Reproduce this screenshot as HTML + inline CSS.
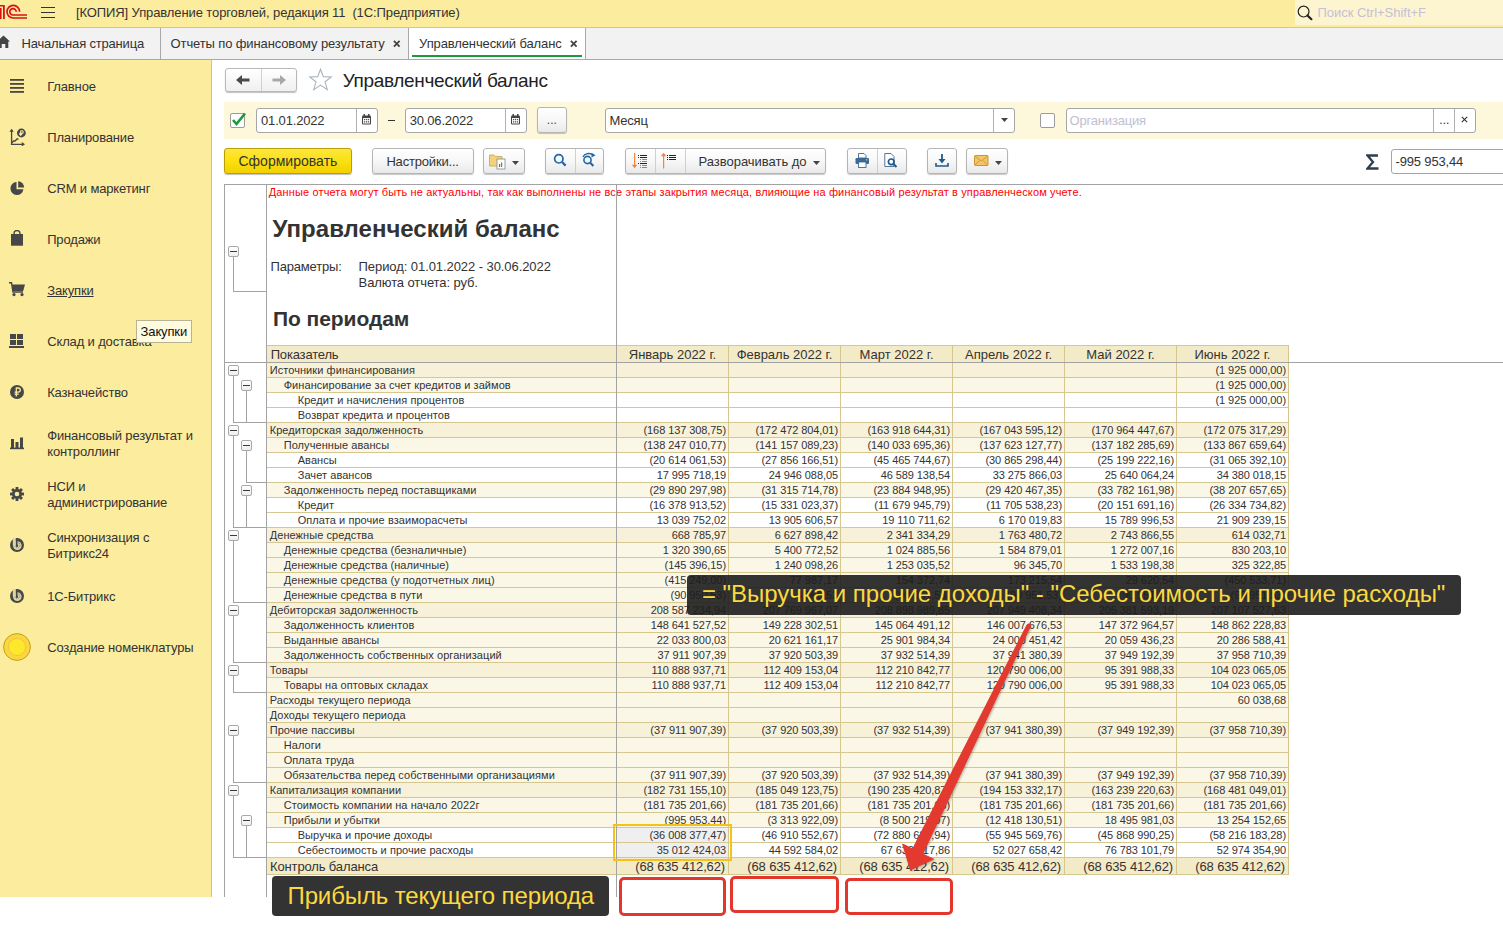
<!DOCTYPE html><html><head><meta charset="utf-8"><title>1C</title><style>*{margin:0;padding:0}
html,body{width:1503px;height:934px;overflow:hidden;background:#fff}
body{position:relative;font-family:"Liberation Sans",sans-serif}
body>div,body>svg{position:absolute}
.t{white-space:nowrap}
</style></head><body>
<div style="left:0px;top:0px;width:1503px;height:27px;background:#fbec9e"></div>
<div style="left:0px;top:27px;width:1503px;height:1px;background:#d9c680"></div>
<div style="left:1295px;top:0px;width:208px;height:25px;background:#fdf5d0"></div>
<svg style="left:0;top:0" width="30" height="27" viewBox="0 0 30 27">
<g fill="#d7121b">
<rect x="0" y="8" width="1.6" height="11"/>
<path d="M0 5 H4.8 V19 H3 V6.6 H0 Z"/>
</g>
<g fill="none" stroke="#d7121b" stroke-width="1.7">
<path d="M19.6 11.8 A6.3 6.3 0 1 0 13.2 18 H27"/>
<path d="M16.2 11.8 A3.2 3.2 0 1 0 13.2 15 H27"/>
</g></svg>
<div style="left:41px;top:7px;width:14px;height:1.4px;background:#333"></div>
<div style="left:41px;top:12px;width:14px;height:1.4px;background:#333"></div>
<div style="left:41px;top:17px;width:14px;height:1.4px;background:#333"></div>
<div class="t" style="left:76px;top:6.30px;font-size:13px;line-height:13px;height:13px;color:#333;letter-spacing:-0.106px;white-space:pre;">[КОПИЯ] Управление торговлей, редакция 11  (1С:Предприятие)</div>
<svg style="left:1297px;top:5px" width="17" height="16" viewBox="0 0 17 16">
<circle cx="6.6" cy="6.6" r="5.4" fill="none" stroke="#222" stroke-width="1.2"/>
<path d="M10.5 10.5 L14.4 14.2" stroke="#222" stroke-width="2.2" stroke-linecap="round"/></svg>
<div class="t" style="left:1317.4px;top:5.60px;font-size:13px;line-height:13px;height:13px;color:#c4c0d6;letter-spacing:-0.022px;">Поиск Ctrl+Shift+F</div>
<div style="left:0px;top:28px;width:1503px;height:31px;background:#f2f2f2"></div>
<div style="left:0px;top:59px;width:1503px;height:1px;background:#a8a8a8"></div>
<div style="left:160px;top:28px;width:1px;height:31px;background:#a8a8a8"></div>
<div style="left:409px;top:28px;width:176px;height:31px;background:#ffffff"></div>
<div style="left:408px;top:28px;width:1px;height:31px;background:#a8a8a8"></div>
<div style="left:585px;top:28px;width:1px;height:31px;background:#a8a8a8"></div>
<div style="left:412px;top:55px;width:170px;height:2px;background:#1c9a3c"></div>
<svg style="left:0;top:35px" width="12" height="14" viewBox="0 0 12 14">
<path d="M-3 6.5 L3.5 0.5 L10 6.5 H8.3 V13 H5.3 V9 H1.7 V13 H-1.3 V6.5 Z" fill="#444"/></svg>
<div class="t" style="left:21.5px;top:37.00px;font-size:13px;line-height:13px;height:13px;color:#333;letter-spacing:-0.183px;">Начальная страница</div>
<div class="t" style="left:170.6px;top:37.00px;font-size:13px;line-height:13px;height:13px;color:#333;letter-spacing:-0.123px;">Отчеты по финансовому результату</div>
<div class="t" style="left:419.1px;top:37.00px;font-size:13px;line-height:13px;height:13px;color:#333;letter-spacing:-0.118px;">Управленческий баланс</div>
<svg style="left:393px;top:40px" width="8" height="8" viewBox="0 0 8 8"><path d="M0.9 0.9 L6.6 6.6 M6.6 0.9 L0.9 6.6" stroke="#444" stroke-width="1.8"/></svg>
<svg style="left:570px;top:40px" width="8" height="8" viewBox="0 0 8 8"><path d="M0.9 0.9 L6.6 6.6 M6.6 0.9 L0.9 6.6" stroke="#444" stroke-width="1.8"/></svg>
<div style="left:0px;top:60px;width:211px;height:837px;background:#fbec9e"></div>
<div style="left:211px;top:60px;width:1px;height:837px;background:#d6c47e"></div>
<svg style="left:10px;top:79px" width="15" height="15"><g fill="#474747"><rect x="0" y="0" width="14" height="1.8"/><rect x="0" y="4" width="14" height="1.8"/><rect x="0" y="8" width="14" height="1.8"/><rect x="0" y="12" width="14" height="1.8"/></g></svg>
<svg style="left:9px;top:128px" width="17" height="18" viewBox="0 0 17 18"><g stroke="#474747" stroke-width="1.3" fill="none"><path d="M2.6 2.5 V16.3 H14"/><path d="M2.6 15 L4.5 13 H6 L8 11 H9.5"/></g><path d="M0.4 3.8 L2.6 0.8 L4.8 3.8 Z M12.8 14.1 L16 16.3 L12.8 18.5 Z" fill="#474747"/><circle cx="12.4" cy="5" r="4.4" fill="#474747"/><path d="M11.7 2.4 V8 M10.3 6.4 H13.2 M11.7 2.7 H12.9 A1.35 1.35 0 0 1 12.9 5.4 H10.3" stroke="#fbec9e" stroke-width="1.1" fill="none"/></svg>
<svg style="left:10px;top:181px" width="15" height="15" viewBox="0 0 15 15"><path d="M6.5 1 A6.5 6.5 0 1 0 13.4 8.2 L6.5 8.2 Z" fill="#474747"/><path d="M8.2 0.3 A6.5 6.5 0 0 1 14.2 6.5 L8.2 6.5 Z" fill="#474747"/></svg>
<svg style="left:10px;top:230px" width="14" height="16" viewBox="0 0 14 16"><rect x="1" y="4" width="12" height="11.7" fill="#474747"/><path d="M4 6 V3.5 A3 3 0 0 1 10 3.5 V6" stroke="#474747" stroke-width="1.4" fill="none"/></svg>
<svg style="left:9px;top:282px" width="17" height="15" viewBox="0 0 17 15"><path d="M0 0.8 H2.5 L4 10 H14" stroke="#474747" stroke-width="1.4" fill="none"/><path d="M3 2.5 H16 L14.2 9 H4 Z" fill="#474747"/><circle cx="5" cy="12.6" r="1.6" fill="#474747"/><circle cx="13" cy="12.6" r="1.6" fill="#474747"/></svg>
<svg style="left:9px;top:333px" width="16" height="16" viewBox="0 0 16 16"><g fill="#474747"><rect x="1" y="1" width="6" height="5"/><rect x="8" y="1" width="6" height="5"/><rect x="1" y="7" width="6" height="5"/><rect x="8" y="7" width="6" height="5"/><rect x="0" y="13" width="15" height="2"/></g></svg>
<svg style="left:10px;top:385px" width="14" height="14" viewBox="0 0 14 14"><circle cx="7" cy="7" r="7" fill="#474747"/><path d="M6.3 11.5 V3 H8.2 A2.1 2.1 0 0 1 8.2 7.2 H4.6 M4.6 9.2 H8.8" stroke="#fbec9e" stroke-width="1.3" fill="none"/></svg>
<svg style="left:10px;top:437px" width="15" height="13" viewBox="0 0 15 13"><g fill="#474747"><rect x="1" y="2" width="3" height="9"/><rect x="5.5" y="5" width="3" height="6"/><rect x="10" y="0.5" width="3" height="10.5"/><rect x="0" y="10.6" width="14" height="1.6"/></g></svg>
<svg style="left:10px;top:487px" width="14" height="14" viewBox="0 0 14 14"><g fill="#474747"><circle cx="7" cy="7" r="5"/><rect x="5.6" y="0" width="2.8" height="14"/><rect x="0" y="5.6" width="14" height="2.8"/><rect x="5.6" y="0" width="2.8" height="14" transform="rotate(45 7 7)"/><rect x="5.6" y="0" width="2.8" height="14" transform="rotate(-45 7 7)"/></g><circle cx="7" cy="7" r="2.3" fill="#fbec9e"/></svg>
<svg style="left:10px;top:538px" width="14" height="14" viewBox="0 0 14 14"><circle cx="7" cy="7" r="7" fill="#474747"/><circle cx="7.3" cy="7.6" r="4.3" fill="#ddd6a2"/><rect x="2.8" y="0" width="3.1" height="7" fill="#ddd6a2"/><rect x="5.9" y="0.3" width="1.6" height="7.5" fill="#474747"/><circle cx="7" cy="7.8" r="1.2" fill="#474747"/><path d="M7.6 4.6 A2.6 2.6 0 1 1 5 8.2" stroke="#474747" stroke-width="0.7" stroke-dasharray="0.8 0.8" fill="none"/></svg>
<svg style="left:10px;top:589px" width="14" height="14" viewBox="0 0 14 14"><circle cx="7" cy="7" r="7" fill="#474747"/><circle cx="7.3" cy="7.6" r="4.3" fill="#ddd6a2"/><rect x="2.8" y="0" width="3.1" height="7" fill="#ddd6a2"/><rect x="5.9" y="0.3" width="1.6" height="7.5" fill="#474747"/><circle cx="7" cy="7.8" r="1.2" fill="#474747"/><path d="M7.6 4.6 A2.6 2.6 0 1 1 5 8.2" stroke="#474747" stroke-width="0.7" stroke-dasharray="0.8 0.8" fill="none"/></svg>
<svg style="left:3px;top:633px" width="28" height="28" viewBox="0 0 28 28">
<circle cx="14" cy="14" r="13.4" fill="#fcd545" stroke="#c4a20a" stroke-width="1"/>
<circle cx="14" cy="14" r="8.6" fill="#fde82c" stroke="#e9c23a" stroke-width="0.8"/></svg>
<div class="t" style="left:47.2px;top:80.00px;font-size:13px;line-height:13px;height:13px;color:#333;letter-spacing:-0.149px;">Главное</div>
<div class="t" style="left:47.2px;top:131.00px;font-size:13px;line-height:13px;height:13px;color:#333;letter-spacing:-0.155px;">Планирование</div>
<div class="t" style="left:47.2px;top:182.00px;font-size:13px;line-height:13px;height:13px;color:#333;letter-spacing:-0.147px;">CRM и маркетинг</div>
<div class="t" style="left:47.2px;top:233.00px;font-size:13px;line-height:13px;height:13px;color:#333;letter-spacing:-0.163px;">Продажи</div>
<div class="t" style="left:47.2px;top:284.00px;font-size:13px;line-height:13px;height:13px;color:#333;letter-spacing:-0.142px;text-decoration:underline;">Закупки</div>
<div class="t" style="left:47.2px;top:335.00px;font-size:13px;line-height:13px;height:13px;color:#333;letter-spacing:-0.140px;">Склад и доставка</div>
<div class="t" style="left:47.2px;top:386.00px;font-size:13px;line-height:13px;height:13px;color:#333;letter-spacing:-0.144px;">Казначейство</div>
<div class="t" style="left:47.2px;top:428.70px;font-size:13px;line-height:13px;height:13px;color:#333;letter-spacing:-0.142px;">Финансовый результат и</div>
<div class="t" style="left:47.2px;top:445.30px;font-size:13px;line-height:13px;height:13px;color:#333;letter-spacing:-0.143px;">контроллинг</div>
<div class="t" style="left:47.2px;top:479.50px;font-size:13px;line-height:13px;height:13px;color:#333;letter-spacing:-0.164px;">НСИ и</div>
<div class="t" style="left:47.2px;top:495.80px;font-size:13px;line-height:13px;height:13px;color:#333;letter-spacing:-0.151px;">администрирование</div>
<div class="t" style="left:47.2px;top:530.60px;font-size:13px;line-height:13px;height:13px;color:#333;letter-spacing:-0.146px;">Синхронизация с</div>
<div class="t" style="left:47.2px;top:546.60px;font-size:13px;line-height:13px;height:13px;color:#333;letter-spacing:-0.147px;">Битрикс24</div>
<div class="t" style="left:47.2px;top:590.00px;font-size:13px;line-height:13px;height:13px;color:#333;letter-spacing:-0.146px;">1С-Битрикс</div>
<div class="t" style="left:47.2px;top:641.00px;font-size:13px;line-height:13px;height:13px;color:#333;letter-spacing:-0.149px;">Создание номенклатуры</div>
<div style="left:136px;top:320px;width:56px;height:23px;background:#fffbdf;border:1px solid #b9b396;box-sizing:border-box"></div>
<div class="t" style="left:140.6px;top:324.70px;font-size:13px;line-height:13px;height:13px;color:#111;letter-spacing:-0.143px;">Закупки</div>
<div style="left:225px;top:68px;width:72px;height:24px;border:1px solid #b9b9b9;border-radius:3px;box-sizing:border-box;background:linear-gradient(#ffffff,#f0f0f0);box-shadow:0 1px 1px rgba(0,0,0,0.25)"></div>
<div style="left:261px;top:69px;width:1px;height:22px;background:#d0d0d0"></div>
<svg style="left:235px;top:73px" width="56" height="14" viewBox="0 0 56 14">
<path d="M1 7 L7 2 V5.5 H14.5 V8.5 H7 V12 Z" fill="#4a4a4a"/>
<path d="M51 7 L45 2 V5.5 H37.5 V8.5 H45 V12 Z" fill="#a8a8a8"/></svg>
<svg style="left:308px;top:68px" width="25" height="24" viewBox="0 0 25 24">
<path d="M12.5 1.2 L15.3 8.6 L23.3 8.9 L17 13.8 L19.3 21.6 L12.5 17.1 L5.7 21.6 L8 13.8 L1.7 8.9 L9.7 8.6 Z" fill="none" stroke="#aab4bd" stroke-width="1.1" stroke-linejoin="miter"/></svg>
<div class="t" style="left:342.7px;top:70.92px;font-size:19px;line-height:19px;height:19px;color:#222;letter-spacing:-0.328px;">Управленческий баланс</div>
<div style="left:224px;top:102px;width:1279px;height:37px;background:#fdf7dc"></div>
<div style="left:230px;top:112.5px;width:15px;height:15px;border:1px solid #9c9c9c;border-radius:2px;box-sizing:border-box;background:#fff"></div>
<svg style="left:230px;top:110.5px" width="17" height="17" viewBox="0 0 17 17"><path d="M3 9 L6.5 13 L15 2.5" stroke="#1a9a3a" stroke-width="2.6" fill="none"/></svg>
<div style="left:256px;top:108px;width:122px;height:25px;border:1px solid #a6a6a6;border-radius:3px;box-sizing:border-box;background:#fff;"></div>
<div style="left:356px;top:109px;width:1px;height:23px;background:#b0b0b0"></div>
<svg style="left:362px;top:114px" width="10" height="11" viewBox="0 0 10 11"><rect x="0" y="1.5" width="9" height="9" rx="1.2" fill="#444"/><rect x="1" y="4" width="7" height="5.5" fill="#fff"/><g fill="#555"><rect x="1.9" y="4.9" width="1.3" height="1.3"/><rect x="3.9" y="4.9" width="1.3" height="1.3"/><rect x="5.9" y="4.9" width="1.3" height="1.3"/><rect x="1.9" y="7.2" width="1.3" height="1.3"/><rect x="3.9" y="7.2" width="1.3" height="1.3"/><rect x="5.9" y="7.2" width="1.3" height="1.3"/></g><rect x="1.5" y="0" width="1.5" height="2.5" fill="#444"/><rect x="6" y="0" width="1.5" height="2.5" fill="#444"/></svg>
<div class="t" style="left:261px;top:113.50px;font-size:13px;line-height:13px;height:13px;color:#333;letter-spacing:-0.163px;">01.01.2022</div>
<div style="left:388px;top:120px;width:7px;height:1.3px;background:#333"></div>
<div style="left:405px;top:108px;width:122px;height:25px;border:1px solid #a6a6a6;border-radius:3px;box-sizing:border-box;background:#fff;"></div>
<div style="left:505px;top:109px;width:1px;height:23px;background:#b0b0b0"></div>
<svg style="left:511px;top:114px" width="10" height="11" viewBox="0 0 10 11"><rect x="0" y="1.5" width="9" height="9" rx="1.2" fill="#444"/><rect x="1" y="4" width="7" height="5.5" fill="#fff"/><g fill="#555"><rect x="1.9" y="4.9" width="1.3" height="1.3"/><rect x="3.9" y="4.9" width="1.3" height="1.3"/><rect x="5.9" y="4.9" width="1.3" height="1.3"/><rect x="1.9" y="7.2" width="1.3" height="1.3"/><rect x="3.9" y="7.2" width="1.3" height="1.3"/><rect x="5.9" y="7.2" width="1.3" height="1.3"/></g><rect x="1.5" y="0" width="1.5" height="2.5" fill="#444"/><rect x="6" y="0" width="1.5" height="2.5" fill="#444"/></svg>
<div class="t" style="left:409.7px;top:113.50px;font-size:13px;line-height:13px;height:13px;color:#333;letter-spacing:-0.163px;">30.06.2022</div>
<div style="left:537px;top:107px;width:30px;height:26px;border:1px solid #b5b5b5;border-radius:3px;box-sizing:border-box;background:linear-gradient(#ffffff 0%,#f7f7f7 50%,#e9e9e9 100%);box-shadow:0 1px 1px rgba(0,0,0,0.22);"></div>
<div class="t" style="left:546.8px;top:113.84px;font-size:12px;line-height:12px;height:12px;color:#444;">...</div>
<div style="left:605px;top:108px;width:410px;height:25px;border:1px solid #a6a6a6;border-radius:3px;box-sizing:border-box;background:#fff;"></div>
<div style="left:993px;top:109px;width:1px;height:23px;background:#b0b0b0"></div>
<svg style="left:1000.5px;top:118px" width="7" height="4" viewBox="0 0 7 4"><path d="M0 0 H7 L3.5 4 Z" fill="#444"/></svg>
<div class="t" style="left:609.5px;top:113.50px;font-size:13px;line-height:13px;height:13px;color:#333;letter-spacing:-0.196px;">Месяц</div>
<div style="left:1040px;top:113px;width:15px;height:15px;border:1px solid #9c9c9c;border-radius:2px;box-sizing:border-box;background:#fff"></div>
<div style="left:1066px;top:108px;width:410px;height:25px;border:1px solid #a6a6a6;border-radius:3px;box-sizing:border-box;background:#fff;"></div>
<div style="left:1433px;top:109px;width:1px;height:23px;background:#b0b0b0"></div>
<div style="left:1454px;top:109px;width:1px;height:23px;background:#b0b0b0"></div>
<div class="t" style="left:1069.5px;top:113.50px;font-size:13px;line-height:13px;height:13px;color:#c0c0d0;letter-spacing:-0.178px;">Организация</div>
<div class="t" style="left:1439.3px;top:113.84px;font-size:12px;line-height:12px;height:12px;color:#333;">...</div>
<svg style="left:1461px;top:116px" width="7" height="7" viewBox="0 0 7 7"><path d="M0.8 0.8 L6.2 6.2 M6.2 0.8 L0.8 6.2" stroke="#333" stroke-width="1.1"/></svg>
<div style="left:224px;top:148px;width:128px;height:26px;border:1px solid #bb9f00;border-radius:3px;box-sizing:border-box;background:linear-gradient(#fde640 0%,#fbe010 50%,#f3d000 100%);box-shadow:0 1px 1px rgba(0,0,0,0.25)"></div>
<div class="t" style="left:238.4px;top:153.95px;font-size:14px;line-height:14px;height:14px;color:#333;letter-spacing:0.026px;">Сформировать</div>
<div style="left:372px;top:148px;width:102px;height:26px;border:1px solid #b5b5b5;border-radius:3px;box-sizing:border-box;background:linear-gradient(#ffffff 0%,#f7f7f7 50%,#e9e9e9 100%);box-shadow:0 1px 1px rgba(0,0,0,0.22);"></div>
<div class="t" style="left:386.4px;top:154.50px;font-size:13px;line-height:13px;height:13px;color:#333;letter-spacing:-0.182px;">Настройки...</div>
<div style="left:483px;top:148px;width:42px;height:26px;border:1px solid #b5b5b5;border-radius:3px;box-sizing:border-box;background:linear-gradient(#ffffff 0%,#f7f7f7 50%,#e9e9e9 100%);box-shadow:0 1px 1px rgba(0,0,0,0.22);"></div>
<svg style="left:489px;top:152px" width="20" height="18" viewBox="0 0 20 18">
<path d="M0.5 3 H5 L6.5 4.5 H13 V14 H0.5 Z" fill="#f4d27a" stroke="#c9a24a" stroke-width="0.8"/>
<rect x="8" y="7" width="8" height="10" fill="#fff" stroke="#7a8a99" stroke-width="0.8"/>
<rect x="10" y="12" width="1.2" height="3" fill="#e04030"/><rect x="12" y="10.5" width="1.2" height="4.5" fill="#40a040"/></svg>
<svg style="left:512px;top:160.5px" width="7" height="4" viewBox="0 0 7 4"><path d="M0 0 H7 L3.5 4 Z" fill="#444"/></svg>
<div style="left:545px;top:148px;width:59px;height:26px;border:1px solid #b5b5b5;border-radius:3px;box-sizing:border-box;background:linear-gradient(#ffffff 0%,#f7f7f7 50%,#e9e9e9 100%);box-shadow:0 1px 1px rgba(0,0,0,0.22);"></div>
<div style="left:575px;top:149px;width:1px;height:24px;background:#cfcfcf"></div>
<svg style="left:553px;top:153px" width="14" height="15" viewBox="0 0 14 15"><circle cx="5.8" cy="5.8" r="4.2" fill="none" stroke="#1d67a8" stroke-width="1.7"/><path d="M9 9 L12.6 12.6" stroke="#1d67a8" stroke-width="2.2"/></svg>
<svg style="left:581px;top:152px" width="17" height="16" viewBox="0 0 17 16"><circle cx="6.5" cy="8" r="3.6" fill="none" stroke="#1d67a8" stroke-width="1.6"/><path d="M9.2 10.8 L12.4 14" stroke="#1d67a8" stroke-width="2.1"/><path d="M2 5 A6 5 0 0 1 12 3" fill="none" stroke="#1d67a8" stroke-width="1.3"/><path d="M10.5 0.8 L14.5 3.3 L10.5 5.6 Z" fill="#1d67a8"/></svg>
<div style="left:625px;top:148px;width:201px;height:26px;border:1px solid #b5b5b5;border-radius:3px;box-sizing:border-box;background:linear-gradient(#ffffff 0%,#f7f7f7 50%,#e9e9e9 100%);box-shadow:0 1px 1px rgba(0,0,0,0.22);"></div>
<div style="left:655px;top:149px;width:1px;height:24px;background:#cfcfcf"></div>
<div style="left:685px;top:149px;width:1px;height:24px;background:#cfcfcf"></div>
<svg style="left:630px;top:152px" width="20" height="18" viewBox="0 0 20 18"><rect x="4" y="1" width="1.2" height="13" fill="#f08442"/><path d="M1.8 12.8 H7.4 L4.6 16.3 Z" fill="#f08442"/>
<g fill="#222"><rect x="8" y="3" width="1" height="1"/><rect x="10" y="3" width="7" height="1"/><rect x="8" y="5" width="1" height="1"/><rect x="10" y="5" width="7" height="1"/><rect x="8" y="11" width="1" height="1"/><rect x="10" y="11" width="7" height="1"/></g>
<g fill="#8a8a8a"><rect x="10" y="7" width="1" height="1"/><rect x="12" y="7" width="5" height="1"/><rect x="10" y="9" width="1" height="1"/><rect x="12" y="9" width="5" height="1"/><rect x="10" y="13" width="1" height="1"/><rect x="12" y="13" width="5" height="1"/><rect x="10" y="15" width="1" height="1"/><rect x="12" y="15" width="5" height="1"/></g></svg>
<svg style="left:659px;top:152px" width="20" height="18" viewBox="0 0 20 18"><rect x="4" y="3.5" width="1.2" height="13" fill="#f08442"/><path d="M1.8 4.2 H7.4 L4.6 0.8 Z" fill="#f08442"/>
<g fill="#222"><rect x="8" y="3" width="1" height="1"/><rect x="10" y="3" width="7" height="1"/><rect x="8" y="5" width="1" height="1"/><rect x="10" y="5" width="7" height="1"/><rect x="8" y="7" width="1" height="1"/><rect x="10" y="7" width="7" height="1"/></g></svg>
<div class="t" style="left:698.5px;top:154.50px;font-size:13px;line-height:13px;height:13px;color:#333;letter-spacing:-0.021px;">Разворачивать до</div>
<svg style="left:813px;top:160.5px" width="7" height="4" viewBox="0 0 7 4"><path d="M0 0 H7 L3.5 4 Z" fill="#444"/></svg>
<div style="left:847px;top:148px;width:60px;height:26px;border:1px solid #b5b5b5;border-radius:3px;box-sizing:border-box;background:linear-gradient(#ffffff 0%,#f7f7f7 50%,#e9e9e9 100%);box-shadow:0 1px 1px rgba(0,0,0,0.22);"></div>
<div style="left:877px;top:149px;width:1px;height:24px;background:#cfcfcf"></div>
<svg style="left:855px;top:153px" width="15" height="15" viewBox="0 0 15 15"><path d="M3.5 0.5 H9 L11 2.5 V5 H3.5 Z" fill="#fff" stroke="#3d6a95" stroke-width="0.9"/><rect x="0.5" y="5" width="13.5" height="6" rx="1.2" fill="#3d6a95"/><rect x="3.5" y="9" width="7.5" height="5.5" fill="#fff" stroke="#3d6a95" stroke-width="0.9"/><circle cx="11.7" cy="6.8" r="0.6" fill="#fff"/></svg>
<svg style="left:884px;top:153px" width="15" height="15" viewBox="0 0 15 15"><path d="M0.8 0.5 H7 L10 3.5 V13.5 H0.8 Z" fill="#fff" stroke="#3d6a95" stroke-width="0.9"/><circle cx="7.2" cy="8.8" r="2.8" fill="none" stroke="#1f5a8a" stroke-width="1.7"/><path d="M9.2 10.8 L12.5 14" stroke="#1f5a8a" stroke-width="2"/></svg>
<div style="left:927px;top:148px;width:30px;height:26px;border:1px solid #b5b5b5;border-radius:3px;box-sizing:border-box;background:linear-gradient(#ffffff 0%,#f7f7f7 50%,#e9e9e9 100%);box-shadow:0 1px 1px rgba(0,0,0,0.22);"></div>
<svg style="left:935px;top:154px" width="15" height="14" viewBox="0 0 15 14"><path d="M7 0 V8" stroke="#1f5a8a" stroke-width="1.8"/><path d="M3.5 5 L7 9.5 L10.5 5 Z" fill="#1f5a8a"/><path d="M1 9 V12 H13 V9" stroke="#1f5a8a" stroke-width="1.6" fill="none"/></svg>
<div style="left:966px;top:148px;width:42px;height:26px;border:1px solid #b5b5b5;border-radius:3px;box-sizing:border-box;background:linear-gradient(#ffffff 0%,#f7f7f7 50%,#e9e9e9 100%);box-shadow:0 1px 1px rgba(0,0,0,0.22);"></div>
<svg style="left:974px;top:155px" width="16" height="12" viewBox="0 0 16 12"><rect x="0.5" y="0.5" width="13.5" height="10" rx="1" fill="#f3c567" stroke="#c48b2d" stroke-width="0.9"/><path d="M0.8 1 L7.25 6 L13.7 1 M0.8 10.3 L5.5 5.5 M13.7 10.3 L9 5.5" fill="none" stroke="#c48b2d" stroke-width="0.8"/></svg>
<svg style="left:995px;top:160.5px" width="7" height="4" viewBox="0 0 7 4"><path d="M0 0 H7 L3.5 4 Z" fill="#444"/></svg>
<svg style="left:1366px;top:154px" width="14" height="16" viewBox="0 0 14 16"><path d="M12 1.5 H1.5 L7 8 L1.5 14.5 H12.5" fill="none" stroke="#2d3e50" stroke-width="2.3" stroke-linejoin="miter"/></svg>
<div style="left:1391px;top:149px;width:120px;height:25px;border:1px solid #a6a6a6;border-radius:3px;box-sizing:border-box;background:#fff;"></div>
<div class="t" style="left:1395.5px;top:155.00px;font-size:13px;line-height:13px;height:13px;color:#333;letter-spacing:-0.158px;">-995 953,44</div>
<div style="left:224px;top:184px;width:1279px;height:1px;background:#a3a3a3"></div>
<div class="t" style="left:268.8px;top:186.69px;font-size:11px;line-height:11px;height:11px;color:#ff0000;letter-spacing:0.125px;">Данные отчета могут быть не актуальны, так как выполнены не все этапы закрытия месяца, влияющие на финансовый результат в управленческом учете.</div>
<div style="left:228px;top:246px;width:11px;height:11px;border:1px solid #a9a9a9;border-radius:2px;box-sizing:border-box;background:linear-gradient(#ffffff,#eeeeee)"></div>
<div style="left:230px;top:251px;width:7px;height:1px;background:#3a3a3a"></div>
<div style="left:233px;top:257px;width:1px;height:34px;background:#a3a3a3"></div>
<div style="left:233px;top:291px;width:33px;height:1px;background:#a3a3a3"></div>
<div class="t" style="left:272.6px;top:217.08px;font-size:24px;line-height:24px;height:24px;color:#333;font-weight:bold;letter-spacing:0.008px;">Управленческий баланс</div>
<div class="t" style="left:270.5px;top:259.60px;font-size:13px;line-height:13px;height:13px;color:#333;letter-spacing:-0.182px;">Параметры:</div>
<div class="t" style="left:358.6px;top:259.60px;font-size:13px;line-height:13px;height:13px;color:#333;letter-spacing:-0.074px;">Период: 01.01.2022 - 30.06.2022</div>
<div class="t" style="left:358.6px;top:276.30px;font-size:13px;line-height:13px;height:13px;color:#333;letter-spacing:-0.096px;">Валюта отчета: руб.</div>
<div class="t" style="left:273px;top:308.12px;font-size:21px;line-height:21px;height:21px;color:#333;font-weight:bold;letter-spacing:-0.059px;">По периодам</div>
<div style="left:266px;top:345px;width:1022px;height:1px;background:#d6c791"></div>
<div style="left:267px;top:346px;width:1021px;height:16px;background:#f3eac8"></div>
<div class="t" style="left:270.7px;top:348.00px;font-size:13px;line-height:13px;height:13px;color:#333;letter-spacing:-0.174px;">Показатель</div>
<div class="t" style="left:628.764453125px;top:348.00px;font-size:13px;line-height:13px;height:13px;color:#333;letter-spacing:0.000px;">Январь 2022 г.</div>
<div class="t" style="left:736.62578125px;top:348.00px;font-size:13px;line-height:13px;height:13px;color:#333;letter-spacing:0.000px;">Февраль 2022 г.</div>
<div class="t" style="left:859.493046875px;top:348.00px;font-size:13px;line-height:13px;height:13px;color:#333;letter-spacing:0.000px;">Март 2022 г.</div>
<div class="t" style="left:964.99609375px;top:348.00px;font-size:13px;line-height:13px;height:13px;color:#333;letter-spacing:0.000px;">Апрель 2022 г.</div>
<div class="t" style="left:1086.31140625px;top:348.00px;font-size:13px;line-height:13px;height:13px;color:#333;letter-spacing:0.000px;">Май 2022 г.</div>
<div class="t" style="left:1194.521796875px;top:348.00px;font-size:13px;line-height:13px;height:13px;color:#333;letter-spacing:0.000px;">Июнь 2022 г.</div>
<div style="left:267px;top:363px;width:1021px;height:14px;background:#f7f1d9"></div>
<div style="left:266px;top:377px;width:1022px;height:1px;background:#d6c791"></div>
<div class="t" style="left:269.7px;top:364.69px;font-size:11px;line-height:11px;height:11px;color:#333;letter-spacing:0.072px;">Источники финансирования</div>
<div class="t" style="right:217px;top:364.69px;font-size:11px;line-height:11px;height:11px;color:#333;letter-spacing:-0.077px;text-align:right;">(1 925 000,00)</div>
<div style="left:267px;top:378px;width:1021px;height:14px;background:#fbf7e7"></div>
<div style="left:266px;top:392px;width:1022px;height:1px;background:#d6c791"></div>
<div class="t" style="left:283.7px;top:379.69px;font-size:11px;line-height:11px;height:11px;color:#333;letter-spacing:0.067px;">Финансирование за счет кредитов и займов</div>
<div class="t" style="right:217px;top:379.69px;font-size:11px;line-height:11px;height:11px;color:#333;letter-spacing:-0.077px;text-align:right;">(1 925 000,00)</div>
<div style="left:267px;top:393px;width:1021px;height:14px;background:#ffffff"></div>
<div style="left:266px;top:407px;width:1022px;height:1px;background:#d6c791"></div>
<div class="t" style="left:297.7px;top:394.69px;font-size:11px;line-height:11px;height:11px;color:#333;letter-spacing:0.068px;">Кредит и начисления процентов</div>
<div class="t" style="right:217px;top:394.69px;font-size:11px;line-height:11px;height:11px;color:#333;letter-spacing:-0.077px;text-align:right;">(1 925 000,00)</div>
<div style="left:267px;top:408px;width:1021px;height:14px;background:#ffffff"></div>
<div style="left:266px;top:422px;width:1022px;height:1px;background:#d6c791"></div>
<div class="t" style="left:297.7px;top:409.69px;font-size:11px;line-height:11px;height:11px;color:#333;letter-spacing:0.067px;">Возврат кредита и процентов</div>
<div style="left:267px;top:423px;width:1021px;height:14px;background:#f7f1d9"></div>
<div style="left:266px;top:437px;width:1022px;height:1px;background:#d6c791"></div>
<div class="t" style="left:269.7px;top:424.69px;font-size:11px;line-height:11px;height:11px;color:#333;letter-spacing:0.070px;">Кредиторская задолженность</div>
<div class="t" style="right:777px;top:424.69px;font-size:11px;line-height:11px;height:11px;color:#333;letter-spacing:-0.079px;text-align:right;">(168 137 308,75)</div>
<div class="t" style="right:665px;top:424.69px;font-size:11px;line-height:11px;height:11px;color:#333;letter-spacing:-0.079px;text-align:right;">(172 472 804,01)</div>
<div class="t" style="right:553px;top:424.69px;font-size:11px;line-height:11px;height:11px;color:#333;letter-spacing:-0.079px;text-align:right;">(163 918 644,31)</div>
<div class="t" style="right:441px;top:424.69px;font-size:11px;line-height:11px;height:11px;color:#333;letter-spacing:-0.079px;text-align:right;">(167 043 595,12)</div>
<div class="t" style="right:329px;top:424.69px;font-size:11px;line-height:11px;height:11px;color:#333;letter-spacing:-0.079px;text-align:right;">(170 964 447,67)</div>
<div class="t" style="right:217px;top:424.69px;font-size:11px;line-height:11px;height:11px;color:#333;letter-spacing:-0.079px;text-align:right;">(172 075 317,29)</div>
<div style="left:267px;top:438px;width:1021px;height:14px;background:#fbf7e7"></div>
<div style="left:266px;top:452px;width:1022px;height:1px;background:#d6c791"></div>
<div class="t" style="left:283.7px;top:439.69px;font-size:11px;line-height:11px;height:11px;color:#333;letter-spacing:0.074px;">Полученные авансы</div>
<div class="t" style="right:777px;top:439.69px;font-size:11px;line-height:11px;height:11px;color:#333;letter-spacing:-0.079px;text-align:right;">(138 247 010,77)</div>
<div class="t" style="right:665px;top:439.69px;font-size:11px;line-height:11px;height:11px;color:#333;letter-spacing:-0.079px;text-align:right;">(141 157 089,23)</div>
<div class="t" style="right:553px;top:439.69px;font-size:11px;line-height:11px;height:11px;color:#333;letter-spacing:-0.079px;text-align:right;">(140 033 695,36)</div>
<div class="t" style="right:441px;top:439.69px;font-size:11px;line-height:11px;height:11px;color:#333;letter-spacing:-0.079px;text-align:right;">(137 623 127,77)</div>
<div class="t" style="right:329px;top:439.69px;font-size:11px;line-height:11px;height:11px;color:#333;letter-spacing:-0.079px;text-align:right;">(137 182 285,69)</div>
<div class="t" style="right:217px;top:439.69px;font-size:11px;line-height:11px;height:11px;color:#333;letter-spacing:-0.079px;text-align:right;">(133 867 659,64)</div>
<div style="left:267px;top:453px;width:1021px;height:14px;background:#ffffff"></div>
<div style="left:266px;top:467px;width:1022px;height:1px;background:#d6c791"></div>
<div class="t" style="left:297.7px;top:454.69px;font-size:11px;line-height:11px;height:11px;color:#333;letter-spacing:0.077px;">Авансы</div>
<div class="t" style="right:777px;top:454.69px;font-size:11px;line-height:11px;height:11px;color:#333;letter-spacing:-0.078px;text-align:right;">(20 614 061,53)</div>
<div class="t" style="right:665px;top:454.69px;font-size:11px;line-height:11px;height:11px;color:#333;letter-spacing:-0.078px;text-align:right;">(27 856 166,51)</div>
<div class="t" style="right:553px;top:454.69px;font-size:11px;line-height:11px;height:11px;color:#333;letter-spacing:-0.078px;text-align:right;">(45 465 744,67)</div>
<div class="t" style="right:441px;top:454.69px;font-size:11px;line-height:11px;height:11px;color:#333;letter-spacing:-0.078px;text-align:right;">(30 865 298,44)</div>
<div class="t" style="right:329px;top:454.69px;font-size:11px;line-height:11px;height:11px;color:#333;letter-spacing:-0.078px;text-align:right;">(25 199 222,16)</div>
<div class="t" style="right:217px;top:454.69px;font-size:11px;line-height:11px;height:11px;color:#333;letter-spacing:-0.078px;text-align:right;">(31 065 392,10)</div>
<div style="left:267px;top:468px;width:1021px;height:14px;background:#ffffff"></div>
<div style="left:266px;top:482px;width:1022px;height:1px;background:#d6c791"></div>
<div class="t" style="left:297.7px;top:469.69px;font-size:11px;line-height:11px;height:11px;color:#333;letter-spacing:0.068px;">Зачет авансов</div>
<div class="t" style="right:777px;top:469.69px;font-size:11px;line-height:11px;height:11px;color:#333;letter-spacing:-0.081px;text-align:right;">17 995 718,19</div>
<div class="t" style="right:665px;top:469.69px;font-size:11px;line-height:11px;height:11px;color:#333;letter-spacing:-0.081px;text-align:right;">24 946 088,05</div>
<div class="t" style="right:553px;top:469.69px;font-size:11px;line-height:11px;height:11px;color:#333;letter-spacing:-0.081px;text-align:right;">46 589 138,54</div>
<div class="t" style="right:441px;top:469.69px;font-size:11px;line-height:11px;height:11px;color:#333;letter-spacing:-0.081px;text-align:right;">33 275 866,03</div>
<div class="t" style="right:329px;top:469.69px;font-size:11px;line-height:11px;height:11px;color:#333;letter-spacing:-0.081px;text-align:right;">25 640 064,24</div>
<div class="t" style="right:217px;top:469.69px;font-size:11px;line-height:11px;height:11px;color:#333;letter-spacing:-0.081px;text-align:right;">34 380 018,15</div>
<div style="left:267px;top:483px;width:1021px;height:14px;background:#fbf7e7"></div>
<div style="left:266px;top:497px;width:1022px;height:1px;background:#d6c791"></div>
<div class="t" style="left:283.7px;top:484.69px;font-size:11px;line-height:11px;height:11px;color:#333;letter-spacing:0.071px;">Задолженность перед поставщиками</div>
<div class="t" style="right:777px;top:484.69px;font-size:11px;line-height:11px;height:11px;color:#333;letter-spacing:-0.078px;text-align:right;">(29 890 297,98)</div>
<div class="t" style="right:665px;top:484.69px;font-size:11px;line-height:11px;height:11px;color:#333;letter-spacing:-0.078px;text-align:right;">(31 315 714,78)</div>
<div class="t" style="right:553px;top:484.69px;font-size:11px;line-height:11px;height:11px;color:#333;letter-spacing:-0.078px;text-align:right;">(23 884 948,95)</div>
<div class="t" style="right:441px;top:484.69px;font-size:11px;line-height:11px;height:11px;color:#333;letter-spacing:-0.078px;text-align:right;">(29 420 467,35)</div>
<div class="t" style="right:329px;top:484.69px;font-size:11px;line-height:11px;height:11px;color:#333;letter-spacing:-0.078px;text-align:right;">(33 782 161,98)</div>
<div class="t" style="right:217px;top:484.69px;font-size:11px;line-height:11px;height:11px;color:#333;letter-spacing:-0.078px;text-align:right;">(38 207 657,65)</div>
<div style="left:267px;top:498px;width:1021px;height:14px;background:#ffffff"></div>
<div style="left:266px;top:512px;width:1022px;height:1px;background:#d6c791"></div>
<div class="t" style="left:297.7px;top:499.69px;font-size:11px;line-height:11px;height:11px;color:#333;letter-spacing:0.072px;">Кредит</div>
<div class="t" style="right:777px;top:499.69px;font-size:11px;line-height:11px;height:11px;color:#333;letter-spacing:-0.078px;text-align:right;">(16 378 913,52)</div>
<div class="t" style="right:665px;top:499.69px;font-size:11px;line-height:11px;height:11px;color:#333;letter-spacing:-0.078px;text-align:right;">(15 331 023,37)</div>
<div class="t" style="right:553px;top:499.69px;font-size:11px;line-height:11px;height:11px;color:#333;letter-spacing:-0.077px;text-align:right;">(11 679 945,79)</div>
<div class="t" style="right:441px;top:499.69px;font-size:11px;line-height:11px;height:11px;color:#333;letter-spacing:-0.077px;text-align:right;">(11 705 538,23)</div>
<div class="t" style="right:329px;top:499.69px;font-size:11px;line-height:11px;height:11px;color:#333;letter-spacing:-0.078px;text-align:right;">(20 151 691,16)</div>
<div class="t" style="right:217px;top:499.69px;font-size:11px;line-height:11px;height:11px;color:#333;letter-spacing:-0.078px;text-align:right;">(26 334 734,82)</div>
<div style="left:267px;top:513px;width:1021px;height:14px;background:#ffffff"></div>
<div style="left:266px;top:527px;width:1022px;height:1px;background:#d6c791"></div>
<div class="t" style="left:297.7px;top:514.69px;font-size:11px;line-height:11px;height:11px;color:#333;letter-spacing:0.069px;">Оплата и прочие взаиморасчеты</div>
<div class="t" style="right:777px;top:514.69px;font-size:11px;line-height:11px;height:11px;color:#333;letter-spacing:-0.081px;text-align:right;">13 039 752,02</div>
<div class="t" style="right:665px;top:514.69px;font-size:11px;line-height:11px;height:11px;color:#333;letter-spacing:-0.081px;text-align:right;">13 905 606,57</div>
<div class="t" style="right:553px;top:514.69px;font-size:11px;line-height:11px;height:11px;color:#333;letter-spacing:-0.079px;text-align:right;">19 110 711,62</div>
<div class="t" style="right:441px;top:514.69px;font-size:11px;line-height:11px;height:11px;color:#333;letter-spacing:-0.080px;text-align:right;">6 170 019,83</div>
<div class="t" style="right:329px;top:514.69px;font-size:11px;line-height:11px;height:11px;color:#333;letter-spacing:-0.081px;text-align:right;">15 789 996,53</div>
<div class="t" style="right:217px;top:514.69px;font-size:11px;line-height:11px;height:11px;color:#333;letter-spacing:-0.081px;text-align:right;">21 909 239,15</div>
<div style="left:267px;top:528px;width:1021px;height:14px;background:#f7f1d9"></div>
<div style="left:266px;top:542px;width:1022px;height:1px;background:#d6c791"></div>
<div class="t" style="left:269.7px;top:529.69px;font-size:11px;line-height:11px;height:11px;color:#333;letter-spacing:0.072px;">Денежные средства</div>
<div class="t" style="right:777px;top:529.69px;font-size:11px;line-height:11px;height:11px;color:#333;letter-spacing:-0.083px;text-align:right;">668 785,97</div>
<div class="t" style="right:665px;top:529.69px;font-size:11px;line-height:11px;height:11px;color:#333;letter-spacing:-0.080px;text-align:right;">6 627 898,42</div>
<div class="t" style="right:553px;top:529.69px;font-size:11px;line-height:11px;height:11px;color:#333;letter-spacing:-0.080px;text-align:right;">2 341 334,29</div>
<div class="t" style="right:441px;top:529.69px;font-size:11px;line-height:11px;height:11px;color:#333;letter-spacing:-0.080px;text-align:right;">1 763 480,72</div>
<div class="t" style="right:329px;top:529.69px;font-size:11px;line-height:11px;height:11px;color:#333;letter-spacing:-0.080px;text-align:right;">2 743 866,55</div>
<div class="t" style="right:217px;top:529.69px;font-size:11px;line-height:11px;height:11px;color:#333;letter-spacing:-0.083px;text-align:right;">614 032,71</div>
<div style="left:267px;top:543px;width:1021px;height:14px;background:#fbf7e7"></div>
<div style="left:266px;top:557px;width:1022px;height:1px;background:#d6c791"></div>
<div class="t" style="left:283.7px;top:544.69px;font-size:11px;line-height:11px;height:11px;color:#333;letter-spacing:0.070px;">Денежные средства (безналичные)</div>
<div class="t" style="right:777px;top:544.69px;font-size:11px;line-height:11px;height:11px;color:#333;letter-spacing:-0.080px;text-align:right;">1 320 390,65</div>
<div class="t" style="right:665px;top:544.69px;font-size:11px;line-height:11px;height:11px;color:#333;letter-spacing:-0.080px;text-align:right;">5 400 772,52</div>
<div class="t" style="right:553px;top:544.69px;font-size:11px;line-height:11px;height:11px;color:#333;letter-spacing:-0.080px;text-align:right;">1 024 885,56</div>
<div class="t" style="right:441px;top:544.69px;font-size:11px;line-height:11px;height:11px;color:#333;letter-spacing:-0.080px;text-align:right;">1 584 879,01</div>
<div class="t" style="right:329px;top:544.69px;font-size:11px;line-height:11px;height:11px;color:#333;letter-spacing:-0.080px;text-align:right;">1 272 007,16</div>
<div class="t" style="right:217px;top:544.69px;font-size:11px;line-height:11px;height:11px;color:#333;letter-spacing:-0.083px;text-align:right;">830 203,10</div>
<div style="left:267px;top:558px;width:1021px;height:14px;background:#fbf7e7"></div>
<div style="left:266px;top:572px;width:1022px;height:1px;background:#d6c791"></div>
<div class="t" style="left:283.7px;top:559.69px;font-size:11px;line-height:11px;height:11px;color:#333;letter-spacing:0.070px;">Денежные средства (наличные)</div>
<div class="t" style="right:777px;top:559.69px;font-size:11px;line-height:11px;height:11px;color:#333;letter-spacing:-0.078px;text-align:right;">(145 396,15)</div>
<div class="t" style="right:665px;top:559.69px;font-size:11px;line-height:11px;height:11px;color:#333;letter-spacing:-0.080px;text-align:right;">1 240 098,26</div>
<div class="t" style="right:553px;top:559.69px;font-size:11px;line-height:11px;height:11px;color:#333;letter-spacing:-0.080px;text-align:right;">1 253 035,52</div>
<div class="t" style="right:441px;top:559.69px;font-size:11px;line-height:11px;height:11px;color:#333;letter-spacing:-0.082px;text-align:right;">96 345,70</div>
<div class="t" style="right:329px;top:559.69px;font-size:11px;line-height:11px;height:11px;color:#333;letter-spacing:-0.080px;text-align:right;">1 533 198,38</div>
<div class="t" style="right:217px;top:559.69px;font-size:11px;line-height:11px;height:11px;color:#333;letter-spacing:-0.083px;text-align:right;">325 322,85</div>
<div style="left:267px;top:573px;width:1021px;height:14px;background:#fbf7e7"></div>
<div style="left:266px;top:587px;width:1022px;height:1px;background:#d6c791"></div>
<div class="t" style="left:283.7px;top:574.69px;font-size:11px;line-height:11px;height:11px;color:#333;letter-spacing:0.068px;">Денежные средства (у подотчетных лиц)</div>
<div class="t" style="right:777px;top:574.69px;font-size:11px;line-height:11px;height:11px;color:#333;letter-spacing:-0.078px;text-align:right;">(415 249,00)</div>
<div class="t" style="right:665px;top:574.69px;font-size:11px;line-height:11px;height:11px;color:#333;letter-spacing:-0.082px;text-align:right;">77 987,17</div>
<div class="t" style="right:553px;top:574.69px;font-size:11px;line-height:11px;height:11px;color:#333;letter-spacing:-0.083px;text-align:right;">154 372,74</div>
<div class="t" style="right:441px;top:574.69px;font-size:11px;line-height:11px;height:11px;color:#333;letter-spacing:-0.083px;text-align:right;">173 215,54</div>
<div class="t" style="right:329px;top:574.69px;font-size:11px;line-height:11px;height:11px;color:#333;letter-spacing:-0.082px;text-align:right;">29 620,54</div>
<div class="t" style="right:217px;top:574.69px;font-size:11px;line-height:11px;height:11px;color:#333;letter-spacing:-0.078px;text-align:right;">(450 533,71)</div>
<div style="left:267px;top:588px;width:1021px;height:14px;background:#fbf7e7"></div>
<div style="left:266px;top:602px;width:1022px;height:1px;background:#d6c791"></div>
<div class="t" style="left:283.7px;top:589.69px;font-size:11px;line-height:11px;height:11px;color:#333;letter-spacing:0.069px;">Денежные средства в пути</div>
<div class="t" style="right:777px;top:589.69px;font-size:11px;line-height:11px;height:11px;color:#333;letter-spacing:-0.077px;text-align:right;">(90 950,53)</div>
<div class="t" style="right:665px;top:589.69px;font-size:11px;line-height:11px;height:11px;color:#333;letter-spacing:-0.080px;text-align:right;">4 069,53</div>
<div class="t" style="right:553px;top:589.69px;font-size:11px;line-height:11px;height:11px;color:#333;letter-spacing:-0.077px;text-align:right;">(90 951,53)</div>
<div class="t" style="right:441px;top:589.69px;font-size:11px;line-height:11px;height:11px;color:#333;letter-spacing:-0.077px;text-align:right;">(90 951,53)</div>
<div class="t" style="right:329px;top:589.69px;font-size:11px;line-height:11px;height:11px;color:#333;letter-spacing:-0.077px;text-align:right;">(90 951,53)</div>
<div class="t" style="right:217px;top:589.69px;font-size:11px;line-height:11px;height:11px;color:#333;letter-spacing:-0.077px;text-align:right;">(90 951,53)</div>
<div style="left:267px;top:603px;width:1021px;height:14px;background:#f7f1d9"></div>
<div style="left:266px;top:617px;width:1022px;height:1px;background:#d6c791"></div>
<div class="t" style="left:269.7px;top:604.69px;font-size:11px;line-height:11px;height:11px;color:#333;letter-spacing:0.070px;">Дебиторская задолженность</div>
<div class="t" style="right:777px;top:604.69px;font-size:11px;line-height:11px;height:11px;color:#333;letter-spacing:-0.082px;text-align:right;">208 587 234,94</div>
<div class="t" style="right:665px;top:604.69px;font-size:11px;line-height:11px;height:11px;color:#333;letter-spacing:-0.082px;text-align:right;">207 769 967,07</div>
<div class="t" style="right:553px;top:604.69px;font-size:11px;line-height:11px;height:11px;color:#333;letter-spacing:-0.082px;text-align:right;">208 898 989,85</div>
<div class="t" style="right:441px;top:604.69px;font-size:11px;line-height:11px;height:11px;color:#333;letter-spacing:-0.082px;text-align:right;">207 949 408,34</div>
<div class="t" style="right:329px;top:604.69px;font-size:11px;line-height:11px;height:11px;color:#333;letter-spacing:-0.082px;text-align:right;">205 381 593,19</div>
<div class="t" style="right:217px;top:604.69px;font-size:11px;line-height:11px;height:11px;color:#333;letter-spacing:-0.082px;text-align:right;">207 107 527,63</div>
<div style="left:267px;top:618px;width:1021px;height:14px;background:#fbf7e7"></div>
<div style="left:266px;top:632px;width:1022px;height:1px;background:#d6c791"></div>
<div class="t" style="left:283.7px;top:619.69px;font-size:11px;line-height:11px;height:11px;color:#333;letter-spacing:0.070px;">Задолженность клиентов</div>
<div class="t" style="right:777px;top:619.69px;font-size:11px;line-height:11px;height:11px;color:#333;letter-spacing:-0.082px;text-align:right;">148 641 527,52</div>
<div class="t" style="right:665px;top:619.69px;font-size:11px;line-height:11px;height:11px;color:#333;letter-spacing:-0.082px;text-align:right;">149 228 302,51</div>
<div class="t" style="right:553px;top:619.69px;font-size:11px;line-height:11px;height:11px;color:#333;letter-spacing:-0.082px;text-align:right;">145 064 491,12</div>
<div class="t" style="right:441px;top:619.69px;font-size:11px;line-height:11px;height:11px;color:#333;letter-spacing:-0.082px;text-align:right;">146 007 676,53</div>
<div class="t" style="right:329px;top:619.69px;font-size:11px;line-height:11px;height:11px;color:#333;letter-spacing:-0.082px;text-align:right;">147 372 964,57</div>
<div class="t" style="right:217px;top:619.69px;font-size:11px;line-height:11px;height:11px;color:#333;letter-spacing:-0.082px;text-align:right;">148 862 228,83</div>
<div style="left:267px;top:633px;width:1021px;height:14px;background:#fbf7e7"></div>
<div style="left:266px;top:647px;width:1022px;height:1px;background:#d6c791"></div>
<div class="t" style="left:283.7px;top:634.69px;font-size:11px;line-height:11px;height:11px;color:#333;letter-spacing:0.076px;">Выданные авансы</div>
<div class="t" style="right:777px;top:634.69px;font-size:11px;line-height:11px;height:11px;color:#333;letter-spacing:-0.081px;text-align:right;">22 033 800,03</div>
<div class="t" style="right:665px;top:634.69px;font-size:11px;line-height:11px;height:11px;color:#333;letter-spacing:-0.081px;text-align:right;">20 621 161,17</div>
<div class="t" style="right:553px;top:634.69px;font-size:11px;line-height:11px;height:11px;color:#333;letter-spacing:-0.081px;text-align:right;">25 901 984,34</div>
<div class="t" style="right:441px;top:634.69px;font-size:11px;line-height:11px;height:11px;color:#333;letter-spacing:-0.081px;text-align:right;">24 000 451,42</div>
<div class="t" style="right:329px;top:634.69px;font-size:11px;line-height:11px;height:11px;color:#333;letter-spacing:-0.081px;text-align:right;">20 059 436,23</div>
<div class="t" style="right:217px;top:634.69px;font-size:11px;line-height:11px;height:11px;color:#333;letter-spacing:-0.081px;text-align:right;">20 286 588,41</div>
<div style="left:267px;top:648px;width:1021px;height:14px;background:#fbf7e7"></div>
<div style="left:266px;top:662px;width:1022px;height:1px;background:#d6c791"></div>
<div class="t" style="left:283.7px;top:649.69px;font-size:11px;line-height:11px;height:11px;color:#333;letter-spacing:0.070px;">Задолженность собственных организаций</div>
<div class="t" style="right:777px;top:649.69px;font-size:11px;line-height:11px;height:11px;color:#333;letter-spacing:-0.080px;text-align:right;">37 911 907,39</div>
<div class="t" style="right:665px;top:649.69px;font-size:11px;line-height:11px;height:11px;color:#333;letter-spacing:-0.081px;text-align:right;">37 920 503,39</div>
<div class="t" style="right:553px;top:649.69px;font-size:11px;line-height:11px;height:11px;color:#333;letter-spacing:-0.081px;text-align:right;">37 932 514,39</div>
<div class="t" style="right:441px;top:649.69px;font-size:11px;line-height:11px;height:11px;color:#333;letter-spacing:-0.081px;text-align:right;">37 941 380,39</div>
<div class="t" style="right:329px;top:649.69px;font-size:11px;line-height:11px;height:11px;color:#333;letter-spacing:-0.081px;text-align:right;">37 949 192,39</div>
<div class="t" style="right:217px;top:649.69px;font-size:11px;line-height:11px;height:11px;color:#333;letter-spacing:-0.081px;text-align:right;">37 958 710,39</div>
<div style="left:267px;top:663px;width:1021px;height:14px;background:#f7f1d9"></div>
<div style="left:266px;top:677px;width:1022px;height:1px;background:#d6c791"></div>
<div class="t" style="left:269.7px;top:664.69px;font-size:11px;line-height:11px;height:11px;color:#333;letter-spacing:0.076px;">Товары</div>
<div class="t" style="right:777px;top:664.69px;font-size:11px;line-height:11px;height:11px;color:#333;letter-spacing:-0.081px;text-align:right;">110 888 937,71</div>
<div class="t" style="right:665px;top:664.69px;font-size:11px;line-height:11px;height:11px;color:#333;letter-spacing:-0.081px;text-align:right;">112 409 153,04</div>
<div class="t" style="right:553px;top:664.69px;font-size:11px;line-height:11px;height:11px;color:#333;letter-spacing:-0.081px;text-align:right;">112 210 842,77</div>
<div class="t" style="right:441px;top:664.69px;font-size:11px;line-height:11px;height:11px;color:#333;letter-spacing:-0.082px;text-align:right;">120 790 006,00</div>
<div class="t" style="right:329px;top:664.69px;font-size:11px;line-height:11px;height:11px;color:#333;letter-spacing:-0.081px;text-align:right;">95 391 988,33</div>
<div class="t" style="right:217px;top:664.69px;font-size:11px;line-height:11px;height:11px;color:#333;letter-spacing:-0.082px;text-align:right;">104 023 065,05</div>
<div style="left:267px;top:678px;width:1021px;height:14px;background:#fbf7e7"></div>
<div style="left:266px;top:692px;width:1022px;height:1px;background:#d6c791"></div>
<div class="t" style="left:283.7px;top:679.69px;font-size:11px;line-height:11px;height:11px;color:#333;letter-spacing:0.068px;">Товары на оптовых складах</div>
<div class="t" style="right:777px;top:679.69px;font-size:11px;line-height:11px;height:11px;color:#333;letter-spacing:-0.081px;text-align:right;">110 888 937,71</div>
<div class="t" style="right:665px;top:679.69px;font-size:11px;line-height:11px;height:11px;color:#333;letter-spacing:-0.081px;text-align:right;">112 409 153,04</div>
<div class="t" style="right:553px;top:679.69px;font-size:11px;line-height:11px;height:11px;color:#333;letter-spacing:-0.081px;text-align:right;">112 210 842,77</div>
<div class="t" style="right:441px;top:679.69px;font-size:11px;line-height:11px;height:11px;color:#333;letter-spacing:-0.082px;text-align:right;">120 790 006,00</div>
<div class="t" style="right:329px;top:679.69px;font-size:11px;line-height:11px;height:11px;color:#333;letter-spacing:-0.081px;text-align:right;">95 391 988,33</div>
<div class="t" style="right:217px;top:679.69px;font-size:11px;line-height:11px;height:11px;color:#333;letter-spacing:-0.082px;text-align:right;">104 023 065,05</div>
<div style="left:267px;top:693px;width:1021px;height:14px;background:#fbf7e7"></div>
<div style="left:266px;top:707px;width:1022px;height:1px;background:#d6c791"></div>
<div class="t" style="left:269.7px;top:694.69px;font-size:11px;line-height:11px;height:11px;color:#333;letter-spacing:0.070px;">Расходы текущего периода</div>
<div class="t" style="right:217px;top:694.69px;font-size:11px;line-height:11px;height:11px;color:#333;letter-spacing:-0.082px;text-align:right;">60 038,68</div>
<div style="left:267px;top:708px;width:1021px;height:14px;background:#fbf7e7"></div>
<div style="left:266px;top:722px;width:1022px;height:1px;background:#d6c791"></div>
<div class="t" style="left:269.7px;top:709.69px;font-size:11px;line-height:11px;height:11px;color:#333;letter-spacing:0.070px;">Доходы текущего периода</div>
<div style="left:267px;top:723px;width:1021px;height:14px;background:#f7f1d9"></div>
<div style="left:266px;top:737px;width:1022px;height:1px;background:#d6c791"></div>
<div class="t" style="left:269.7px;top:724.69px;font-size:11px;line-height:11px;height:11px;color:#333;letter-spacing:0.072px;">Прочие пассивы</div>
<div class="t" style="right:777px;top:724.69px;font-size:11px;line-height:11px;height:11px;color:#333;letter-spacing:-0.077px;text-align:right;">(37 911 907,39)</div>
<div class="t" style="right:665px;top:724.69px;font-size:11px;line-height:11px;height:11px;color:#333;letter-spacing:-0.078px;text-align:right;">(37 920 503,39)</div>
<div class="t" style="right:553px;top:724.69px;font-size:11px;line-height:11px;height:11px;color:#333;letter-spacing:-0.078px;text-align:right;">(37 932 514,39)</div>
<div class="t" style="right:441px;top:724.69px;font-size:11px;line-height:11px;height:11px;color:#333;letter-spacing:-0.078px;text-align:right;">(37 941 380,39)</div>
<div class="t" style="right:329px;top:724.69px;font-size:11px;line-height:11px;height:11px;color:#333;letter-spacing:-0.078px;text-align:right;">(37 949 192,39)</div>
<div class="t" style="right:217px;top:724.69px;font-size:11px;line-height:11px;height:11px;color:#333;letter-spacing:-0.078px;text-align:right;">(37 958 710,39)</div>
<div style="left:267px;top:738px;width:1021px;height:14px;background:#fbf7e7"></div>
<div style="left:266px;top:752px;width:1022px;height:1px;background:#d6c791"></div>
<div class="t" style="left:283.7px;top:739.69px;font-size:11px;line-height:11px;height:11px;color:#333;letter-spacing:0.074px;">Налоги</div>
<div style="left:267px;top:753px;width:1021px;height:14px;background:#fbf7e7"></div>
<div style="left:266px;top:767px;width:1022px;height:1px;background:#d6c791"></div>
<div class="t" style="left:283.7px;top:754.69px;font-size:11px;line-height:11px;height:11px;color:#333;letter-spacing:0.070px;">Оплата труда</div>
<div style="left:267px;top:768px;width:1021px;height:14px;background:#fbf7e7"></div>
<div style="left:266px;top:782px;width:1022px;height:1px;background:#d6c791"></div>
<div class="t" style="left:283.7px;top:769.69px;font-size:11px;line-height:11px;height:11px;color:#333;letter-spacing:0.070px;">Обязательства перед собственными организациями</div>
<div class="t" style="right:777px;top:769.69px;font-size:11px;line-height:11px;height:11px;color:#333;letter-spacing:-0.077px;text-align:right;">(37 911 907,39)</div>
<div class="t" style="right:665px;top:769.69px;font-size:11px;line-height:11px;height:11px;color:#333;letter-spacing:-0.078px;text-align:right;">(37 920 503,39)</div>
<div class="t" style="right:553px;top:769.69px;font-size:11px;line-height:11px;height:11px;color:#333;letter-spacing:-0.078px;text-align:right;">(37 932 514,39)</div>
<div class="t" style="right:441px;top:769.69px;font-size:11px;line-height:11px;height:11px;color:#333;letter-spacing:-0.078px;text-align:right;">(37 941 380,39)</div>
<div class="t" style="right:329px;top:769.69px;font-size:11px;line-height:11px;height:11px;color:#333;letter-spacing:-0.078px;text-align:right;">(37 949 192,39)</div>
<div class="t" style="right:217px;top:769.69px;font-size:11px;line-height:11px;height:11px;color:#333;letter-spacing:-0.078px;text-align:right;">(37 958 710,39)</div>
<div style="left:267px;top:783px;width:1021px;height:14px;background:#f7f1d9"></div>
<div style="left:266px;top:797px;width:1022px;height:1px;background:#d6c791"></div>
<div class="t" style="left:269.7px;top:784.69px;font-size:11px;line-height:11px;height:11px;color:#333;letter-spacing:0.071px;">Капитализация компании</div>
<div class="t" style="right:777px;top:784.69px;font-size:11px;line-height:11px;height:11px;color:#333;letter-spacing:-0.079px;text-align:right;">(182 731 155,10)</div>
<div class="t" style="right:665px;top:784.69px;font-size:11px;line-height:11px;height:11px;color:#333;letter-spacing:-0.079px;text-align:right;">(185 049 123,75)</div>
<div class="t" style="right:553px;top:784.69px;font-size:11px;line-height:11px;height:11px;color:#333;letter-spacing:-0.079px;text-align:right;">(190 235 420,87)</div>
<div class="t" style="right:441px;top:784.69px;font-size:11px;line-height:11px;height:11px;color:#333;letter-spacing:-0.079px;text-align:right;">(194 153 332,17)</div>
<div class="t" style="right:329px;top:784.69px;font-size:11px;line-height:11px;height:11px;color:#333;letter-spacing:-0.079px;text-align:right;">(163 239 220,63)</div>
<div class="t" style="right:217px;top:784.69px;font-size:11px;line-height:11px;height:11px;color:#333;letter-spacing:-0.079px;text-align:right;">(168 481 049,01)</div>
<div style="left:267px;top:798px;width:1021px;height:14px;background:#fbf7e7"></div>
<div style="left:266px;top:812px;width:1022px;height:1px;background:#d6c791"></div>
<div class="t" style="left:283.7px;top:799.69px;font-size:11px;line-height:11px;height:11px;color:#333;letter-spacing:0.068px;">Стоимость компании на начало 2022г</div>
<div class="t" style="right:777px;top:799.69px;font-size:11px;line-height:11px;height:11px;color:#333;letter-spacing:-0.079px;text-align:right;">(181 735 201,66)</div>
<div class="t" style="right:665px;top:799.69px;font-size:11px;line-height:11px;height:11px;color:#333;letter-spacing:-0.079px;text-align:right;">(181 735 201,66)</div>
<div class="t" style="right:553px;top:799.69px;font-size:11px;line-height:11px;height:11px;color:#333;letter-spacing:-0.079px;text-align:right;">(181 735 201,66)</div>
<div class="t" style="right:441px;top:799.69px;font-size:11px;line-height:11px;height:11px;color:#333;letter-spacing:-0.079px;text-align:right;">(181 735 201,66)</div>
<div class="t" style="right:329px;top:799.69px;font-size:11px;line-height:11px;height:11px;color:#333;letter-spacing:-0.079px;text-align:right;">(181 735 201,66)</div>
<div class="t" style="right:217px;top:799.69px;font-size:11px;line-height:11px;height:11px;color:#333;letter-spacing:-0.079px;text-align:right;">(181 735 201,66)</div>
<div style="left:267px;top:813px;width:1021px;height:14px;background:#fbf7e7"></div>
<div style="left:266px;top:827px;width:1022px;height:1px;background:#d6c791"></div>
<div class="t" style="left:283.7px;top:814.69px;font-size:11px;line-height:11px;height:11px;color:#333;letter-spacing:0.071px;">Прибыли и убытки</div>
<div class="t" style="right:777px;top:814.69px;font-size:11px;line-height:11px;height:11px;color:#333;letter-spacing:-0.078px;text-align:right;">(995 953,44)</div>
<div class="t" style="right:665px;top:814.69px;font-size:11px;line-height:11px;height:11px;color:#333;letter-spacing:-0.077px;text-align:right;">(3 313 922,09)</div>
<div class="t" style="right:553px;top:814.69px;font-size:11px;line-height:11px;height:11px;color:#333;letter-spacing:-0.077px;text-align:right;">(8 500 219,07)</div>
<div class="t" style="right:441px;top:814.69px;font-size:11px;line-height:11px;height:11px;color:#333;letter-spacing:-0.078px;text-align:right;">(12 418 130,51)</div>
<div class="t" style="right:329px;top:814.69px;font-size:11px;line-height:11px;height:11px;color:#333;letter-spacing:-0.081px;text-align:right;">18 495 981,03</div>
<div class="t" style="right:217px;top:814.69px;font-size:11px;line-height:11px;height:11px;color:#333;letter-spacing:-0.081px;text-align:right;">13 254 152,65</div>
<div style="left:267px;top:828px;width:1021px;height:14px;background:#ffffff"></div>
<div style="left:617px;top:828px;width:111px;height:14px;background:#efefef"></div>
<div style="left:266px;top:842px;width:1022px;height:1px;background:#d6c791"></div>
<div class="t" style="left:297.7px;top:829.69px;font-size:11px;line-height:11px;height:11px;color:#333;letter-spacing:0.069px;">Выручка и прочие доходы</div>
<div class="t" style="right:777px;top:829.69px;font-size:11px;line-height:11px;height:11px;color:#333;letter-spacing:-0.078px;text-align:right;">(36 008 377,47)</div>
<div class="t" style="right:665px;top:829.69px;font-size:11px;line-height:11px;height:11px;color:#333;letter-spacing:-0.078px;text-align:right;">(46 910 552,67)</div>
<div class="t" style="right:553px;top:829.69px;font-size:11px;line-height:11px;height:11px;color:#333;letter-spacing:-0.078px;text-align:right;">(72 880 637,94)</div>
<div class="t" style="right:441px;top:829.69px;font-size:11px;line-height:11px;height:11px;color:#333;letter-spacing:-0.078px;text-align:right;">(55 945 569,76)</div>
<div class="t" style="right:329px;top:829.69px;font-size:11px;line-height:11px;height:11px;color:#333;letter-spacing:-0.078px;text-align:right;">(45 868 990,25)</div>
<div class="t" style="right:217px;top:829.69px;font-size:11px;line-height:11px;height:11px;color:#333;letter-spacing:-0.078px;text-align:right;">(58 216 183,28)</div>
<div style="left:267px;top:843px;width:1021px;height:14px;background:#ffffff"></div>
<div style="left:617px;top:843px;width:111px;height:14px;background:#efefef"></div>
<div style="left:266px;top:857px;width:1022px;height:1px;background:#d6c791"></div>
<div class="t" style="left:297.7px;top:844.69px;font-size:11px;line-height:11px;height:11px;color:#333;letter-spacing:0.069px;">Себестоимость и прочие расходы</div>
<div class="t" style="right:777px;top:844.69px;font-size:11px;line-height:11px;height:11px;color:#333;letter-spacing:-0.081px;text-align:right;">35 012 424,03</div>
<div class="t" style="right:665px;top:844.69px;font-size:11px;line-height:11px;height:11px;color:#333;letter-spacing:-0.081px;text-align:right;">44 592 584,02</div>
<div class="t" style="right:553px;top:844.69px;font-size:11px;line-height:11px;height:11px;color:#333;letter-spacing:-0.081px;text-align:right;">67 630 417,86</div>
<div class="t" style="right:441px;top:844.69px;font-size:11px;line-height:11px;height:11px;color:#333;letter-spacing:-0.081px;text-align:right;">52 027 658,42</div>
<div class="t" style="right:329px;top:844.69px;font-size:11px;line-height:11px;height:11px;color:#333;letter-spacing:-0.081px;text-align:right;">76 783 101,79</div>
<div class="t" style="right:217px;top:844.69px;font-size:11px;line-height:11px;height:11px;color:#333;letter-spacing:-0.081px;text-align:right;">52 974 354,90</div>
<div style="left:267px;top:858px;width:1021px;height:16px;background:#f3eac8"></div>
<div style="left:266px;top:874px;width:1022px;height:1px;background:#d6c791"></div>
<div class="t" style="left:270px;top:859.60px;font-size:13px;line-height:13px;height:13px;color:#333;letter-spacing:-0.136px;">Контроль баланса</div>
<div class="t" style="right:778px;top:859.60px;font-size:13px;line-height:13px;height:13px;color:#333;letter-spacing:-0.140px;text-align:right;">(68 635 412,62)</div>
<div class="t" style="right:666px;top:859.60px;font-size:13px;line-height:13px;height:13px;color:#333;letter-spacing:-0.140px;text-align:right;">(68 635 412,62)</div>
<div class="t" style="right:554px;top:859.60px;font-size:13px;line-height:13px;height:13px;color:#333;letter-spacing:-0.140px;text-align:right;">(68 635 412,62)</div>
<div class="t" style="right:442px;top:859.60px;font-size:13px;line-height:13px;height:13px;color:#333;letter-spacing:-0.140px;text-align:right;">(68 635 412,62)</div>
<div class="t" style="right:330px;top:859.60px;font-size:13px;line-height:13px;height:13px;color:#333;letter-spacing:-0.140px;text-align:right;">(68 635 412,62)</div>
<div class="t" style="right:218px;top:859.60px;font-size:13px;line-height:13px;height:13px;color:#333;letter-spacing:-0.140px;text-align:right;">(68 635 412,62)</div>
<div style="left:728px;top:345px;width:1px;height:530px;background:#d6c791"></div>
<div style="left:840px;top:345px;width:1px;height:530px;background:#d6c791"></div>
<div style="left:952px;top:345px;width:1px;height:530px;background:#d6c791"></div>
<div style="left:1064px;top:345px;width:1px;height:530px;background:#d6c791"></div>
<div style="left:1176px;top:345px;width:1px;height:530px;background:#d6c791"></div>
<div style="left:1288px;top:345px;width:1px;height:530px;background:#d6c791"></div>
<div style="left:228px;top:365px;width:11px;height:11px;border:1px solid #a9a9a9;border-radius:2px;box-sizing:border-box;background:linear-gradient(#ffffff,#eeeeee)"></div>
<div style="left:230px;top:370px;width:7px;height:1px;background:#3a3a3a"></div>
<div style="left:233px;top:376px;width:1px;height:46px;background:#a3a3a3"></div>
<div style="left:233px;top:422px;width:33px;height:1px;background:#a3a3a3"></div>
<div style="left:241px;top:380px;width:11px;height:11px;border:1px solid #a9a9a9;border-radius:2px;box-sizing:border-box;background:linear-gradient(#ffffff,#eeeeee)"></div>
<div style="left:243px;top:385px;width:7px;height:1px;background:#3a3a3a"></div>
<div style="left:246px;top:391px;width:1px;height:31px;background:#a3a3a3"></div>
<div style="left:246px;top:422px;width:20px;height:1px;background:#a3a3a3"></div>
<div style="left:228px;top:425px;width:11px;height:11px;border:1px solid #a9a9a9;border-radius:2px;box-sizing:border-box;background:linear-gradient(#ffffff,#eeeeee)"></div>
<div style="left:230px;top:430px;width:7px;height:1px;background:#3a3a3a"></div>
<div style="left:233px;top:436px;width:1px;height:91px;background:#a3a3a3"></div>
<div style="left:233px;top:527px;width:33px;height:1px;background:#a3a3a3"></div>
<div style="left:241px;top:440px;width:11px;height:11px;border:1px solid #a9a9a9;border-radius:2px;box-sizing:border-box;background:linear-gradient(#ffffff,#eeeeee)"></div>
<div style="left:243px;top:445px;width:7px;height:1px;background:#3a3a3a"></div>
<div style="left:246px;top:451px;width:1px;height:31px;background:#a3a3a3"></div>
<div style="left:246px;top:482px;width:20px;height:1px;background:#a3a3a3"></div>
<div style="left:241px;top:485px;width:11px;height:11px;border:1px solid #a9a9a9;border-radius:2px;box-sizing:border-box;background:linear-gradient(#ffffff,#eeeeee)"></div>
<div style="left:243px;top:490px;width:7px;height:1px;background:#3a3a3a"></div>
<div style="left:246px;top:496px;width:1px;height:31px;background:#a3a3a3"></div>
<div style="left:246px;top:527px;width:20px;height:1px;background:#a3a3a3"></div>
<div style="left:228px;top:530px;width:11px;height:11px;border:1px solid #a9a9a9;border-radius:2px;box-sizing:border-box;background:linear-gradient(#ffffff,#eeeeee)"></div>
<div style="left:230px;top:535px;width:7px;height:1px;background:#3a3a3a"></div>
<div style="left:233px;top:541px;width:1px;height:61px;background:#a3a3a3"></div>
<div style="left:233px;top:602px;width:33px;height:1px;background:#a3a3a3"></div>
<div style="left:228px;top:605px;width:11px;height:11px;border:1px solid #a9a9a9;border-radius:2px;box-sizing:border-box;background:linear-gradient(#ffffff,#eeeeee)"></div>
<div style="left:230px;top:610px;width:7px;height:1px;background:#3a3a3a"></div>
<div style="left:233px;top:616px;width:1px;height:46px;background:#a3a3a3"></div>
<div style="left:233px;top:662px;width:33px;height:1px;background:#a3a3a3"></div>
<div style="left:228px;top:665px;width:11px;height:11px;border:1px solid #a9a9a9;border-radius:2px;box-sizing:border-box;background:linear-gradient(#ffffff,#eeeeee)"></div>
<div style="left:230px;top:670px;width:7px;height:1px;background:#3a3a3a"></div>
<div style="left:233px;top:676px;width:1px;height:16px;background:#a3a3a3"></div>
<div style="left:233px;top:692px;width:33px;height:1px;background:#a3a3a3"></div>
<div style="left:228px;top:725px;width:11px;height:11px;border:1px solid #a9a9a9;border-radius:2px;box-sizing:border-box;background:linear-gradient(#ffffff,#eeeeee)"></div>
<div style="left:230px;top:730px;width:7px;height:1px;background:#3a3a3a"></div>
<div style="left:233px;top:736px;width:1px;height:46px;background:#a3a3a3"></div>
<div style="left:233px;top:782px;width:33px;height:1px;background:#a3a3a3"></div>
<div style="left:228px;top:785px;width:11px;height:11px;border:1px solid #a9a9a9;border-radius:2px;box-sizing:border-box;background:linear-gradient(#ffffff,#eeeeee)"></div>
<div style="left:230px;top:790px;width:7px;height:1px;background:#3a3a3a"></div>
<div style="left:233px;top:796px;width:1px;height:61px;background:#a3a3a3"></div>
<div style="left:233px;top:857px;width:33px;height:1px;background:#a3a3a3"></div>
<div style="left:241px;top:815px;width:11px;height:11px;border:1px solid #a9a9a9;border-radius:2px;box-sizing:border-box;background:linear-gradient(#ffffff,#eeeeee)"></div>
<div style="left:243px;top:820px;width:7px;height:1px;background:#3a3a3a"></div>
<div style="left:246px;top:826px;width:1px;height:31px;background:#a3a3a3"></div>
<div style="left:246px;top:857px;width:20px;height:1px;background:#a3a3a3"></div>
<div style="left:224px;top:184px;width:1px;height:713px;background:#a3a3a3"></div>
<div style="left:266px;top:184px;width:1px;height:713px;background:#a3a3a3"></div>
<div style="left:616px;top:184px;width:1px;height:713px;background:#a3a3a3"></div>
<div style="left:224px;top:362px;width:1279px;height:1px;background:#a3a3a3"></div>
<div style="left:613px;top:824px;width:119px;height:37px;border:2px solid #f5c21b;box-sizing:border-box"></div>
<div style="left:687px;top:574.5px;width:774px;height:40.5px;border-radius:4px;background:rgba(30,30,30,0.905)"></div>
<div class="t" style="left:701.9px;top:581.58px;font-size:24px;line-height:24px;height:24px;color:#fcd93f;letter-spacing:-0.015px;white-space:pre;">= &quot;Выручка и прочие доходы&quot; - &quot;Себестоимость и прочие расходы&quot;</div>
<div style="left:272px;top:876px;width:337px;height:40px;border-radius:4px;background:#333333"></div>
<div class="t" style="left:287.5px;top:883.98px;font-size:24px;line-height:24px;height:24px;color:#fcd93f;letter-spacing:-0.119px;">Прибыль текущего периода</div>
<div style="left:619px;top:877px;width:106.5px;height:38.5px;border:3px solid #e3372e;border-radius:5px;box-sizing:border-box"></div>
<div style="left:730px;top:876px;width:108.5px;height:37px;border:3px solid #e3372e;border-radius:5px;box-sizing:border-box"></div>
<div style="left:845px;top:878px;width:108px;height:37px;border:3px solid #e3372e;border-radius:5px;box-sizing:border-box"></div>
<svg style="left:0;top:0;filter:drop-shadow(1px 1px 1px rgba(0,0,0,0.3))" width="1503" height="934" viewBox="0 0 1503 934">
<path d="M1030.4 626.2 L922.6 854.1 L933.5 859.1 L910.4 869.8 L902.7 844.1 L912.6 849.1 L1027.2 624.6 Z" fill="#e4392f" stroke="#e4392f" stroke-width="1" stroke-linejoin="round"/>
<circle cx="1028.8" cy="625.4" r="2" fill="#e4392f"/>
</svg>
</body></html>
